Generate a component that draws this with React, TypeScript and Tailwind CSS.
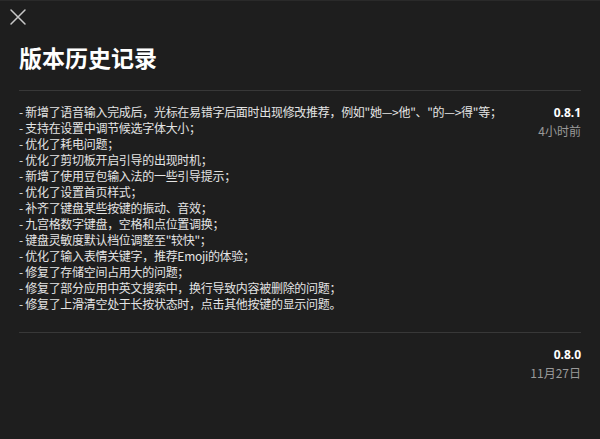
type Release = {
  version: string;
  time: string;
  notes: string[];
};

const releases: Release[] = [
  {
    version: "0.8.1",
    time: "4小时前",
    notes: [
      "新增了语音输入完成后，光标在易错字后面时出现修改推荐，例如\"她—>他\"、\"的—>得\"等；",
      "支持在设置中调节候选字体大小；",
      "优化了耗电问题；",
      "优化了剪切板开启引导的出现时机；",
      "新增了使用豆包输入法的一些引导提示；",
      "优化了设置首页样式；",
      "补齐了键盘某些按键的振动、音效；",
      "九宫格数字键盘，空格和点位置调换；",
      "键盘灵敏度默认档位调整至\"较快\"；",
      "优化了输入表情关键字，推荐Emoji的体验；",
      "修复了存储空间占用大的问题；",
      "修复了部分应用中英文搜索中，换行导致内容被删除的问题；",
      "修复了上滑清空处于长按状态时，点击其他按键的显示问题。",
    ],
  },
  {
    version: "0.8.0",
    time: "11月27日",
    notes: [],
  },
];

export default function App() {
  return (
    <div className="min-h-screen w-full bg-[#1e1e1e] border-t border-[#2a2a2a] font-['Segoe_UI','Noto_Sans','Noto_Sans_CJK_SC',sans-serif] text-[#e4e4e4]">
      <div className="pl-[9px] pt-[7px]">
        <button className="flex h-[18px] w-[18px] items-center justify-center text-[#c8c8c8]">
          <svg width="18" height="18" viewBox="0 0 18 18" fill="none" stroke="currentColor" strokeWidth="1.5" strokeLinecap="round">
            <path d="M2 2 L16 16 M16 2 L2 16" />
          </svg>
        </button>
      </div>

      <div className="px-[19px]">
        <h1 className="mt-[15px] text-[23px] leading-[32px] font-bold text-white font-['Noto_Sans_CJK_SC',sans-serif]">
          版本历史记录
        </h1>

        <div className="mt-[17px] flex flex-col">
          {releases.map((r) => (
            <div
              key={r.version}
              className="flex border-t border-[#383838] pt-[13px] pb-[20px]"
            >
              <ul className="flex-1 min-w-0 text-[12px] leading-[16px] tracking-[-0.3px] font-['Noto_Sans_CJK_SC',sans-serif]">
                {r.notes.map((n) => (
                  <li key={n} className="whitespace-nowrap">
                    - {n}
                  </li>
                ))}
              </ul>
              <div className="flex flex-col items-end shrink-0 pl-4 pt-[1px]">
                <span className="text-[12px] leading-[16px] font-bold text-white">
                  {r.version}
                </span>
                <span className="mt-[2px] text-[12px] leading-[16px] text-[#9a9a9a] font-['Noto_Sans_CJK_SC',sans-serif]">
                  {r.time}
                </span>
              </div>
            </div>
          ))}
        </div>
      </div>
    </div>
  );
}
